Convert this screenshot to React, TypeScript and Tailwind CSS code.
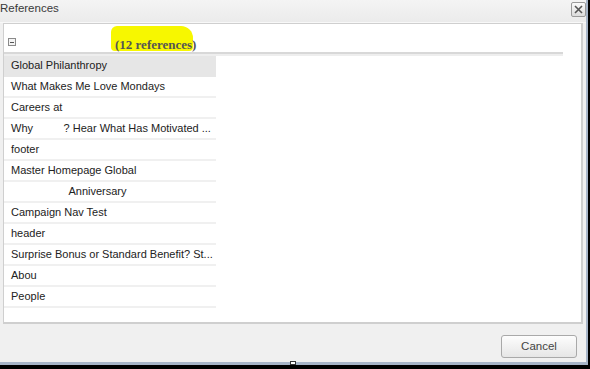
import React from "react";

const items = [
  "Global Philanthropy",
  "What Makes Me Love Mondays",
  "Careers at",
  "Why          ? Hear What Has Motivated ...",
  "footer",
  "Master Homepage Global",
  "                   Anniversary",
  "Campaign Nav Test",
  "header",
  "Surprise Bonus or Standard Benefit? St...",
  "Abou",
  "People",
];

export default function App() {
  return (
    <div className="w-[590px] h-[369px] bg-black overflow-hidden" style={{ fontFamily: '"Liberation Sans", Arial, sans-serif' }}>
      <div className="relative w-[588px] h-[365px] bg-[#f0f0f0] border-r-2 border-b-[3px] border-[#a7b5c8] flex flex-col">
        {/* title bar */}
        <div className="h-[23px] flex items-start justify-between bg-gradient-to-b from-[#f4f4f4] to-[#ebebeb] border-b border-[#f8f8f8]">
          <span className="text-[11.5px] text-[#3a3a3a] leading-none mt-[3px]">References</span>
          <div className="w-[15px] h-[15px] mt-[2px] border border-[#9a9a9a] rounded-[2px] bg-gradient-to-b from-[#fafafa] to-[#dcdcdc] flex items-center justify-center">
            <svg width="9" height="9" viewBox="0 0 9 9">
              <path d="M1 1 L8 8 M8 1 L1 8" stroke="#555" strokeWidth="1.6" />
            </svg>
          </div>
        </div>
        {/* panel */}
        <div className="ml-[3px] mr-[3px] h-[301px] bg-white border border-[#cfcfcf] border-r-2 border-b-2 flex flex-col overflow-hidden">
          <div className="h-[28px] flex items-end relative">
            <div className="ml-[4px] mb-[6px] w-[8px] h-[8px] border border-[#8a8a8a] bg-[#f4f4f4] flex items-center justify-center">
              <div className="w-[4px] h-[1px] bg-[#555]" />
            </div>
            <div className="ml-[95px] mb-[1px] w-[82px] h-[25px] bg-[#f7f700] rounded-tl-[6px] rounded-tr-[12px] rounded-b-[4px] relative">
              <span className="absolute left-[4px] top-[9px] whitespace-nowrap text-[13px] font-bold text-[#555]" style={{ fontFamily: '"Liberation Serif", "DejaVu Serif", serif' }}>
                (12 references)
              </span>
            </div>
          </div>
          <div className="w-[559px] h-[2px] bg-[#d8d8d8]" />
          <div className="w-[559px] h-[2px] bg-[#eeeeee]" />
          <div className="w-[212px] flex flex-col">
            {items.map((t, i) => (
              <div
                key={i}
                className={`h-[21px] flex items-center pl-[7px] text-[11px] text-[#222] whitespace-pre border-b-2 ${i === 0 ? "bg-[#e6e6e6] border-[#e6e6e6]" : "border-[#f0f0f0]"}`}
              >
                {t}
              </div>
            ))}
          </div>
        </div>
        {/* footer */}
        <div className="flex-1 flex items-start justify-end pr-[9px] pt-[11px]">
          <button className="w-[76px] h-[23px] rounded-[3px] border border-[#a9a9a9] bg-gradient-to-b from-[#fdfdfd] to-[#e6e6e6] text-[11.5px] text-[#444]">
            Cancel
          </button>
        </div>
        <div className="absolute left-[290px] bottom-[-3px] w-[6px] h-[4px] bg-white border border-[#333]" />
      </div>
    </div>
  );
}
